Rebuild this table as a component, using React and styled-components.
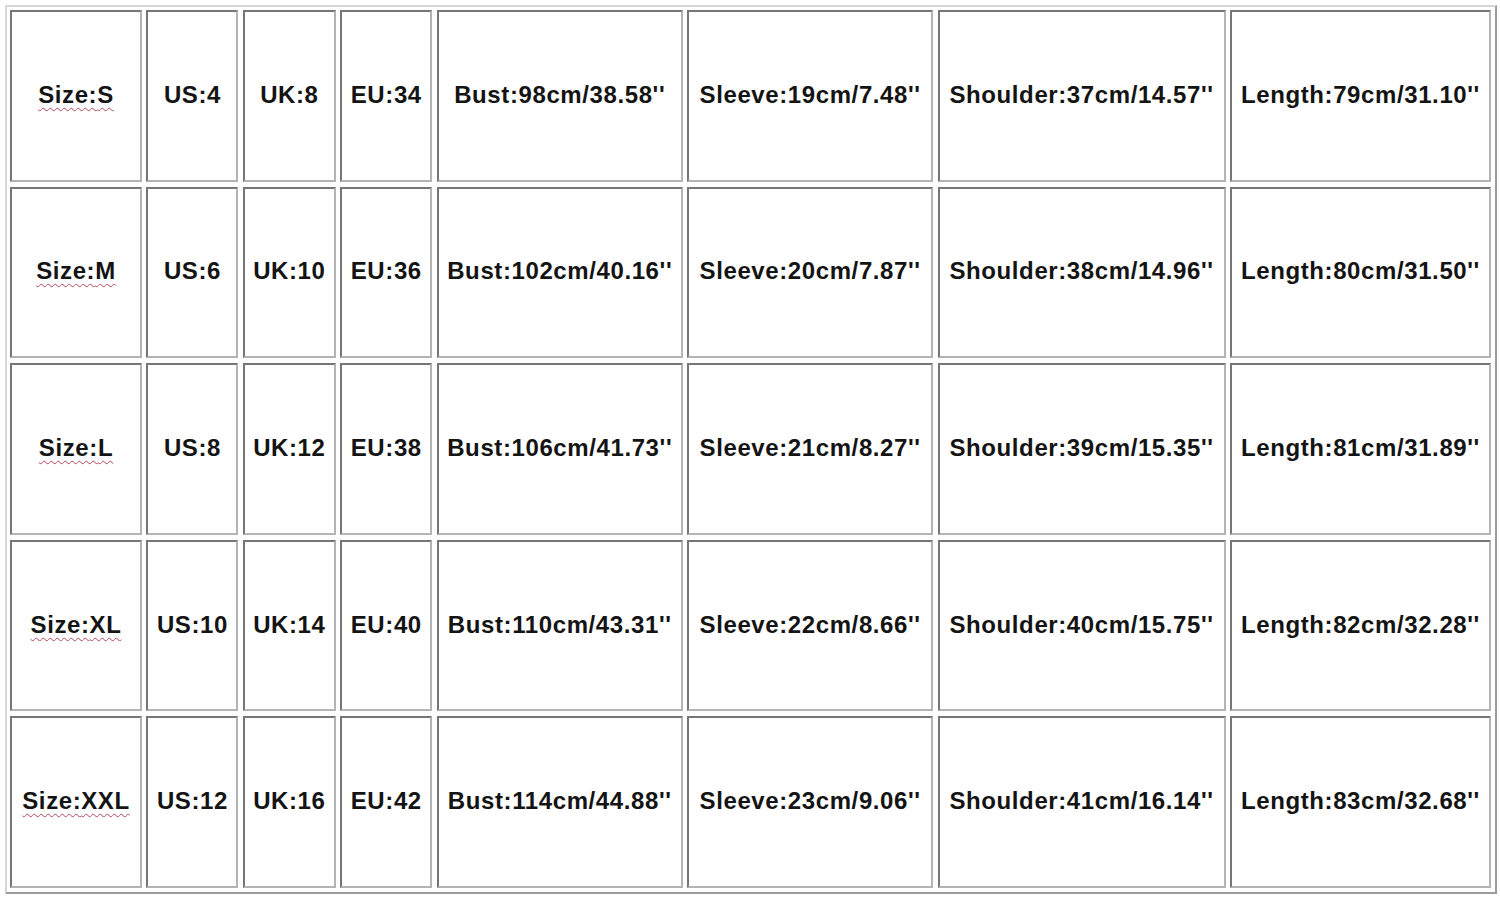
import React from 'react';
import styled, { createGlobalStyle } from 'styled-components';

const rows = [
  ['S', 'US:4', 'UK:8', 'EU:34', 'Bust:98cm/38.58\'\'', 'Sleeve:19cm/7.48\'\'', 'Shoulder:37cm/14.57\'\'', 'Length:79cm/31.10\'\''],
  ['M', 'US:6', 'UK:10', 'EU:36', 'Bust:102cm/40.16\'\'', 'Sleeve:20cm/7.87\'\'', 'Shoulder:38cm/14.96\'\'', 'Length:80cm/31.50\'\''],
  ['L', 'US:8', 'UK:12', 'EU:38', 'Bust:106cm/41.73\'\'', 'Sleeve:21cm/8.27\'\'', 'Shoulder:39cm/15.35\'\'', 'Length:81cm/31.89\'\''],
  ['XL', 'US:10', 'UK:14', 'EU:40', 'Bust:110cm/43.31\'\'', 'Sleeve:22cm/8.66\'\'', 'Shoulder:40cm/15.75\'\'', 'Length:82cm/32.28\'\''],
  ['XXL', 'US:12', 'UK:16', 'EU:42', 'Bust:114cm/44.88\'\'', 'Sleeve:23cm/9.06\'\'', 'Shoulder:41cm/16.14\'\'', 'Length:83cm/32.68\'\''],
];

const GlobalStyle = createGlobalStyle`
  html, body {
    margin: 0;
    padding: 0;
    background: #fff;
  }
  body {
    font-family: "Liberation Sans", Arial, sans-serif;
  }
`;

const Frame = styled.div`
  box-sizing: border-box;
  margin: 5px;
  width: 1492px;
  height: 889px;
  padding: 3px 4px 4px 3px;
  border: 2px solid;
  border-color: #d6d6d6 #9c9c9c #9c9c9c #d6d6d6;
`;

const Grid = styled.div`
  display: grid;
  grid-template-columns: 132px 92px 93px 92px 246px 246px 288px 261px;
  grid-template-rows: repeat(5, 1fr);
  column-gap: calc((1481px - 1450px) / 7);
  row-gap: 5px;
  height: 100%;
`;

const Cell = styled.div`
  box-sizing: border-box;
  display: flex;
  align-items: center;
  justify-content: center;
  border: 2px solid;
  border-color: #767676 #b4b4b4 #b4b4b4 #767676;
  color: #141414;
  font-size: 24px;
  font-weight: bold;
  letter-spacing: 0.6px;
  white-space: nowrap;
  padding-bottom: 2px;
`;

const SizeLabel = styled.span`
  text-decoration: underline wavy #b8455a;
  text-decoration-thickness: 1px;
  text-underline-offset: 4px;
`;

export default function App() {
  return (
    <>
      <GlobalStyle />
      <Frame>
        <Grid>
          {rows.map((row) =>
            row.map((value, i) => (
              <Cell key={`${row[0]}-${i}`}>
                {i === 0 ? <SizeLabel>Size:{value}</SizeLabel> : value}
              </Cell>
            ))
          )}
        </Grid>
      </Frame>
    </>
  );
}
